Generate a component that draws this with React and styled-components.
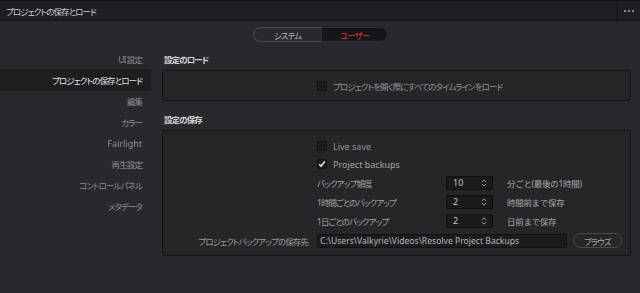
import React from "react";
import styled, { createGlobalStyle, css } from "styled-components";

const Global = createGlobalStyle`
  html, body { margin: 0; padding: 0; background: #28282d; }
  body {
    width: 640px; height: 293px; overflow: hidden;
    font-family: "Noto Sans", "Noto Sans CJK JP", sans-serif;
    font-feature-settings: "palt";
    font-size: 9px;
    color: #a0a0a0;
  }
  * { box-sizing: border-box; }
`;

const jp = css`
  font-size: 8.5px;
  letter-spacing: -0.9px;
  white-space: nowrap;
`;

const Window = styled.div`
  width: 640px;
  height: 293px;
  display: flex;
  flex-direction: column;
  background: #28282d;
`;

const TitleBar = styled.div`
  height: 21px;
  display: flex;
  align-items: stretch;
  background: #1f1f23;
  border-top: 1px solid #131315;
  border-bottom: 1px solid #131315;
`;

const Title = styled.div`
  flex: 1;
  display: flex;
  align-items: center;
  padding-left: 6px;
  color: #cdcdcd;
  ${jp}
`;

const MenuArea = styled.div`
  width: 23px;
  border-left: 1px solid #121214;
  display: flex;
  align-items: center;
  justify-content: center;
  gap: 2px;
  padding-right: 1px;
`;

const Dot = styled.span`
  width: 2px;
  height: 2px;
  background: #8a8a8c;
`;

const Main = styled.div`
  flex: 1;
  display: flex;
  flex-direction: column;
`;

const TabRow = styled.div`
  display: flex;
  justify-content: center;
  margin-top: 6px;
  padding-left: 1px;
`;

const Segmented = styled.div`
  display: flex;
  height: 15px;
`;

const Seg = styled.div`
  width: ${(p) => (p.$first ? 68 : 67)}px;
  display: flex;
  align-items: center;
  justify-content: center;
  ${jp}
  color: ${(p) => (p.$active ? "#cf3d2e" : "#b4b4b6")};
  background: ${(p) => (p.$active ? "#161618" : "transparent")};
  border: 1px solid ${(p) => (p.$active ? "#2e2e33" : "#4a4a50")};
  border-radius: ${(p) => (p.$first ? "8px 0 0 8px" : "0 8px 8px 0")};
  ${(p) => (p.$first ? "border-right: none;" : "")}
`;

const Body = styled.div`
  display: flex;
  margin-top: 6px;
`;

const Sidebar = styled.div`
  width: 151px;
  display: flex;
  flex-direction: column;
`;

const NavItem = styled.div`
  height: ${(p) => (p.$active ? 22 : 21)}px;
  margin-top: ${(p) => (p.$active ? "-0.5px" : "0")};
  display: flex;
  align-items: center;
  justify-content: flex-end;
  padding-right: 9px;
  ${(p) => (p.$latin ? "font-size: 9px;" : jp)}
  color: ${(p) => (p.$active ? "#e2e2e4" : "#8e8e92")};
  background: ${(p) => (p.$active ? "#1e1e21" : "transparent")};
`;

const Content = styled.div`
  flex: 1;
  display: flex;
  flex-direction: column;
  padding: 0 9px 0 11px;
`;

const SectionTitle = styled.div`
  height: 22px;
  display: flex;
  align-items: center;
  padding-left: 2px;
  color: #d6d6d8;
  ${jp}
  font-weight: 700;
  margin-top: ${(p) => (p.$spaced ? "7px" : "0")};
`;

const Panel = styled.div`
  background: #262629;
  border: 1px solid #141416;
  border-radius: 3px;
  padding: ${(p) => p.$pad || "0"};
  display: flex;
  flex-direction: column;
`;

const Row = styled.div`
  display: grid;
  grid-template-columns: 145px 1fr;
  column-gap: 9px;
  align-items: center;
  height: ${(p) => p.$h}px;
`;

const Label = styled.div`
  text-align: right;
  color: #9c9c9f;
  ${jp}
`;

const Control = styled.div`
  display: flex;
  align-items: center;
`;

const Box = styled.span`
  width: 10px;
  height: 10px;
  border: 1px solid #111113;
  background: #1d1d20;
  border-radius: 1px;
  margin-right: 6px;
  display: flex;
  align-items: center;
  justify-content: center;
`;

const CheckText = styled.span`
  color: ${(p) => p.$c || "#929295"};
  ${(p) => (p.$jp ? jp : "")}
`;

const StepLabel = styled.span`
  width: 129px;
  color: #a2a2a5;
  ${jp}
`;

const Stepper = styled.div`
  width: 47px;
  height: 14px;
  background: #1b1b1e;
  border: 1px solid #0e0e10;
  border-radius: 2px;
  display: flex;
  align-items: center;
  justify-content: space-between;
  padding: 0 5px 0 6px;
  color: #c4c4c6;
`;

const Unit = styled.span`
  margin-left: 14px;
  color: #a8a8ab;
  font-size: 8.5px;
  white-space: nowrap;
  font-feature-settings: normal;
  letter-spacing: -0.3px;
`;

const PathInput = styled.div`
  width: 250px;
  height: 14px;
  background: #1c1c1f;
  border: 1px solid #111113;
  border-radius: 2px;
  display: flex;
  align-items: center;
  padding-left: 2px;
  color: #b6b6b8;
  font-size: 8.6px;
  white-space: nowrap;
`;

const Button = styled.div`
  width: 49px;
  height: 15px;
  margin-left: 6px;
  border: 1px solid #4c4c52;
  border-radius: 8px;
  display: flex;
  align-items: center;
  justify-content: center;
  color: #a4a4a7;
  ${jp}
`;

const Check = () => (
  <svg width="8" height="8" viewBox="0 0 8 8">
    <path d="M1.2 4.3 L3.1 6.3 L6.9 1.4" fill="none" stroke="#f2f2f2" strokeWidth="1.4" />
  </svg>
);

const Updown = () => (
  <svg width="6" height="8" viewBox="0 0 6 8">
    <path d="M0.8 3 L3 0.9 L5.2 3 M0.8 5 L3 7.1 L5.2 5" fill="none" stroke="#a8a8ab" strokeWidth="0.9" />
  </svg>
);

const nav = [
  ["UI 設定"],
  ["プロジェクトの保存とロード"],
  ["編集"],
  ["カラー"],
  ["Fairlight", true],
  ["再生設定"],
  ["コントロールパネル"],
  ["メタデータ"],
];

const steps = [
  ["バックアップ頻度", "10", "分ごと(最後の1時間)"],
  ["1時間ごとのバックアップ", "2", "時間前まで保存"],
  ["1日ごとのバックアップ", "2", "日前まで保存"],
];

export default function App() {
  return (
    <Window>
      <Global />
      <TitleBar>
        <Title>プロジェクトの保存とロード</Title>
        <MenuArea>
          <Dot />
          <Dot />
          <Dot />
        </MenuArea>
      </TitleBar>
      <Main>
        <TabRow>
          <Segmented>
            <Seg $first>システム</Seg>
            <Seg $active>ユーザー</Seg>
          </Segmented>
        </TabRow>
        <Body>
          <Sidebar>
            {nav.map(([n, latin], i) => (
              <NavItem key={n} $active={i === 1} $latin={latin}>
                {n}
              </NavItem>
            ))}
          </Sidebar>
          <Content>
            <SectionTitle>設定のロード</SectionTitle>
            <Panel>
              <Row $h={29}>
                <span />
                <Control>
                  <Box />
                  <CheckText $jp>プロジェクトを開く際にすべてのタイムラインをロード</CheckText>
                </Control>
              </Row>
            </Panel>
            <SectionTitle $spaced>設定の保存</SectionTitle>
            <Panel $pad="6px 0 4px 0">
              <Row $h={18}>
                <span />
                <Control>
                  <Box />
                  <CheckText>Live save</CheckText>
                </Control>
              </Row>
              <Row $h={18}>
                <span />
                <Control>
                  <Box>
                    <Check />
                  </Box>
                  <CheckText $c="#a2a2a5">Project backups</CheckText>
                </Control>
              </Row>
              {steps.map(([l, v, u]) => (
                <Row $h={19} key={l}>
                  <span />
                  <Control>
                    <StepLabel>{l}</StepLabel>
                    <Stepper>
                      <span>{v}</span>
                      <Updown />
                    </Stepper>
                    <Unit>{u}</Unit>
                  </Control>
                </Row>
              ))}
              <Row $h={21}>
                <Label>プロジェクトバックアップの保存先</Label>
                <Control>
                  <PathInput>C:\Users\Valkyrie\Videos\Resolve Project Backups</PathInput>
                  <Button>ブラウズ</Button>
                </Control>
              </Row>
            </Panel>
          </Content>
        </Body>
      </Main>
    </Window>
  );
}
